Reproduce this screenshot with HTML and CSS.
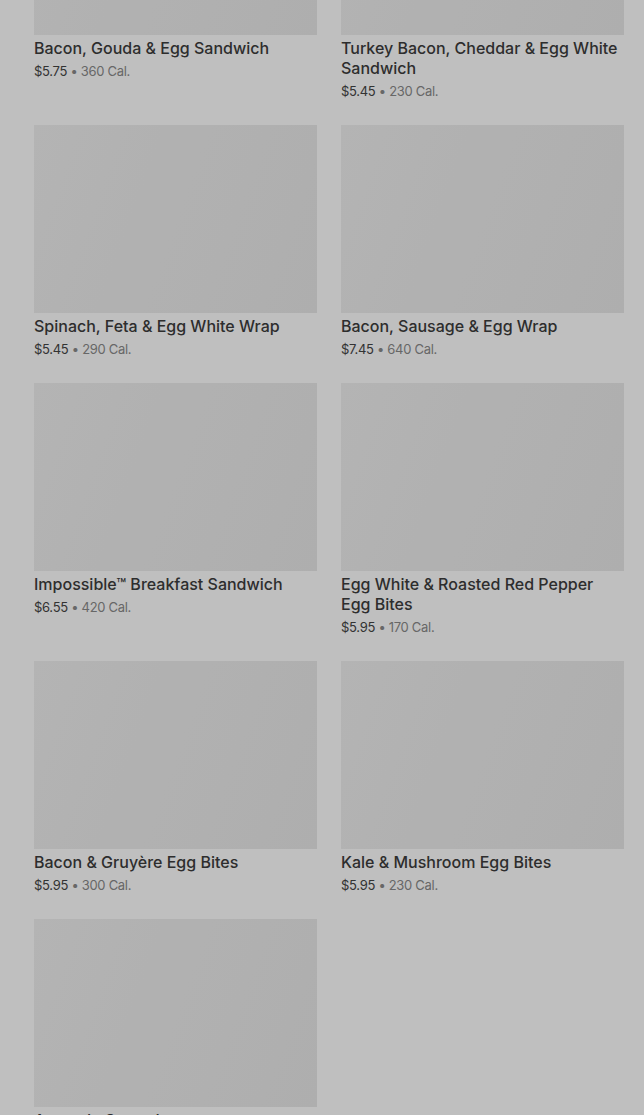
FILE: index.html
```html
<!DOCTYPE html>
<html lang="en">
<head>
    <meta charset="UTF-8">
    <meta name="viewport" content="width=device-width, initial-scale=1.0">
    <title>Hot Breakfast</title>
    <link rel="stylesheet" href="styles.css">
</head>
<body>

<div class="menu-grid">
    <div class="product">
        <div class="product-image"></div>
        <h3 class="product-name">Bacon, Gouda &amp; Egg Sandwich</h3>
        <p class="product-info">$5.75 <span class="product-cal">• 360 Cal.</span></p>
    </div>
    <div class="product">
        <div class="product-image"></div>
        <h3 class="product-name">Turkey Bacon, Cheddar &amp; Egg White Sandwich</h3>
        <p class="product-info">$5.45 <span class="product-cal">• 230 Cal.</span></p>
    </div>
    <div class="product">
        <div class="product-image"></div>
        <h3 class="product-name">Spinach, Feta &amp; Egg White Wrap</h3>
        <p class="product-info">$5.45 <span class="product-cal">• 290 Cal.</span></p>
    </div>
    <div class="product">
        <div class="product-image"></div>
        <h3 class="product-name">Bacon, Sausage &amp; Egg Wrap</h3>
        <p class="product-info">$7.45 <span class="product-cal">• 640 Cal.</span></p>
    </div>
    <div class="product">
        <div class="product-image"></div>
        <h3 class="product-name">Impossible™ Breakfast Sandwich</h3>
        <p class="product-info">$6.55 <span class="product-cal">• 420 Cal.</span></p>
    </div>
    <div class="product">
        <div class="product-image"></div>
        <h3 class="product-name">Egg White &amp; Roasted Red Pepper Egg Bites</h3>
        <p class="product-info">$5.95 <span class="product-cal">• 170 Cal.</span></p>
    </div>
    <div class="product">
        <div class="product-image"></div>
        <h3 class="product-name">Bacon &amp; Gruyère Egg Bites</h3>
        <p class="product-info">$5.95 <span class="product-cal">• 300 Cal.</span></p>
    </div>
    <div class="product">
        <div class="product-image"></div>
        <h3 class="product-name">Kale &amp; Mushroom Egg Bites</h3>
        <p class="product-info">$5.95 <span class="product-cal">• 230 Cal.</span></p>
    </div>
    <div class="product">
        <div class="product-image"></div>
        <h3 class="product-name">Avocado Spread</h3>
        <p class="product-info">$1.25 <span class="product-cal">• 90 Cal.</span></p>
    </div>
</div>

<!-- modal backdrop -->
<div class="backdrop"></div>

</body>
</html>
```

FILE: styles.css
```css
body {
    font-family: 'Inter', 'Liberation Sans', sans-serif;
    margin: 0;
    padding: 0;
    background-color: #ffffff;
    overflow: hidden;
}

.menu-grid {
    display: grid;
    grid-template-columns: 283px 283px;
    column-gap: 24px;
    row-gap: 24px;
    padding: 0 20px 0 34px;
    margin-top: -153px;
}

.product-image {
    height: 188px;
    background: linear-gradient(110deg, #f0f0f0 0%, #ececec 50%, #e9e9e9 100%);
}

.product-name {
    margin: 3px 0 0;
    padding-right: 4px;
    font-size: 16px;
    line-height: 20px;
    font-weight: 500;
    color: #3d3d3d;
}

.product-info {
    margin: 3px 0 0;
    font-size: 13px;
    line-height: 20px;
    color: #444444;
    letter-spacing: -0.3px;
}

.product-cal {
    color: #8a8a8a;
}

.backdrop {
    position: fixed;
    top: 0;
    left: 0;
    right: 0;
    bottom: 0;
    background-color: rgba(0, 0, 0, 0.25);
}
```
